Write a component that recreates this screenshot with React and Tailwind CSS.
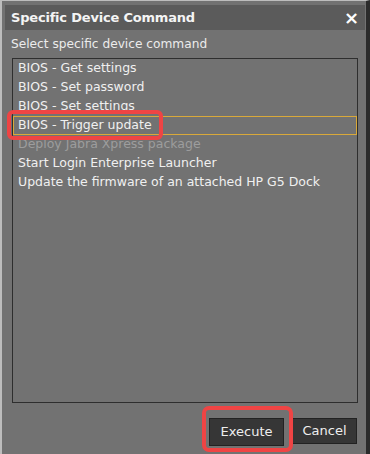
import React from 'react';

const COMMANDS = [
  { label: 'BIOS - Get settings' },
  { label: 'BIOS - Set password' },
  { label: 'BIOS - Set settings' },
  { label: 'BIOS - Trigger update', selected: true },
  { label: 'Deploy Jabra Xpress package', dim: true },
  { label: 'Start Login Enterprise Launcher' },
  { label: 'Update the firmware of an attached HP G5 Dock' },
];

const CommandRow = ({ item }) => (
  <div
    className={`h-[19px] pl-[4px] pb-[1px] flex items-center whitespace-nowrap border ${
      item.selected ? 'border-[#d9a93a]' : 'border-transparent'
    } ${item.dim ? 'text-[#9d9d9d]' : 'text-[#f0f0f0]'}`}
  >
    {item.label}
  </div>
);

export default function App() {
  return (
    <div className="relative w-[370px] h-[454px] bg-[#727272] border-l-2 border-l-[#bdbdbd] border-t border-t-[#bdbdbd] border-r-4 border-r-[#2b2b2b] pl-[3px] pr-[1px] pt-[4px] font-['DejaVu_Sans',sans-serif] overflow-hidden">
      <div className="h-[25px] bg-[#5b5b5b] flex items-center justify-between pl-[6px] pr-[6px] pt-[1px]">
        <span className="text-[13px] tracking-[-0.2px] font-bold text-[#f4f4f4]">Specific Device Command</span>
        <span className="text-[18px] font-bold text-white leading-none">×</span>
      </div>
      <div className="pl-[6px] pt-[5px] text-[12.2px] text-[#ececec] h-[28px]">Select specific device command</div>
      <div className="ml-[7px] mr-[7px] h-[345px] border border-[#2e2e2e] text-[12.5px]">
        {COMMANDS.map((item) => (
          <CommandRow key={item.label} item={item} />
        ))}
      </div>
      <div className="flex justify-end gap-[8px] pr-[8px] pt-[15px]">
        <button className="w-[75px] h-[28px] bg-[#363636] border border-[#222] text-[13px] text-[#eeeeee]">Execute</button>
        <button className="w-[65px] h-[26px] bg-[#363636] border border-[#222] text-[13px] text-[#eeeeee]">Cancel</button>
      </div>
      <div className="absolute left-[5px] top-[109px] w-[156px] h-[30px] border-[4px] border-[#ef4444] rounded-[6px]" />
      <div className="absolute left-[200px] top-[405px] w-[91px] h-[46px] border-[4px] border-[#ef4444] rounded-[7px]" />
    </div>
  );
}
